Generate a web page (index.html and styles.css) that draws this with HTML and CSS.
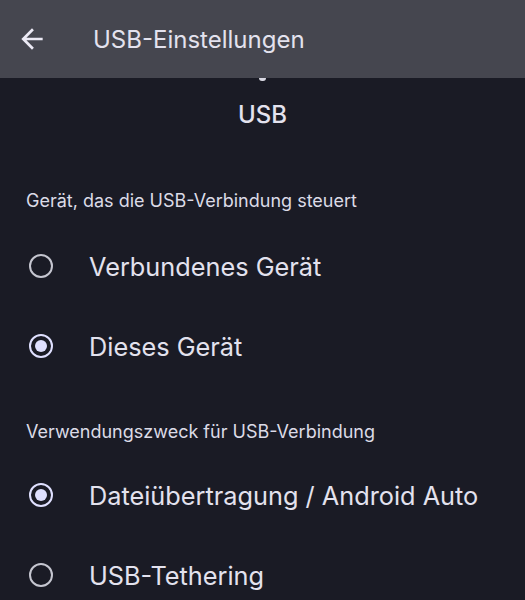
FILE: index.html
```html
<!DOCTYPE html>
<html lang="de">

<head>
    <meta charset="UTF-8">
    <meta name="viewport" content="width=device-width, initial-scale=1.0">
    <title>USB-Einstellungen</title>
    <link rel="stylesheet" href="styles.css">
</head>

<body>

    <header class="app-bar">
        <button class="back-btn" aria-label="Zurück">
            <svg viewBox="0 0 24 24" width="32" height="32">
                <path d="M20 11H7.83l5.59-5.59L12 4l-8 8 8 8 1.41-1.41L7.83 13H20v-2z" fill="currentColor"/>
            </svg>
        </button>
        <h1 class="app-title">USB-Einstellungen</h1>
    </header>

    <main class="content">
        <div class="peek"></div>
        <div class="page-title">USB</div>

        <div class="section-label first">Gerät, das die USB-Verbindung steuert</div>
        <label class="radio-row">
            <input type="radio" name="control">
            <span class="radio"></span>
            <span class="radio-text">Verbundenes Gerät</span>
        </label>
        <label class="radio-row">
            <input type="radio" name="control" checked>
            <span class="radio"></span>
            <span class="radio-text">Dieses Gerät</span>
        </label>

        <div class="section-label">Verwendungszweck für USB-Verbindung</div>
        <label class="radio-row">
            <input type="radio" name="mode" checked>
            <span class="radio"></span>
            <span class="radio-text">Dateiübertragung / Android Auto</span>
        </label>
        <label class="radio-row">
            <input type="radio" name="mode">
            <span class="radio"></span>
            <span class="radio-text">USB-Tethering</span>
        </label>
    </main>

</body>

</html>
```

FILE: styles.css
```css
body {
    font-family: Inter, Roboto, sans-serif;
    margin: 0;
    background-color: #1a1b25;
    color: #e3e2ee;
    height: 600px;
    overflow: hidden;
}

.app-bar {
    display: flex;
    align-items: center;
    height: 78px;
    background-color: #45464f;
}

.back-btn {
    display: flex;
    align-items: center;
    justify-content: center;
    width: 32px;
    height: 32px;
    margin-left: 16px;
    padding: 0;
    border: none;
    background: none;
    color: #eceaf5;
}

.app-title {
    margin: 0 0 0 45px;
    font-size: 24px;
    font-weight: 400;
    color: #e3e2ee;
}

.content {
    display: flex;
    flex-direction: column;
}

.peek {
    align-self: center;
    width: 7px;
    height: 3px;
    border-radius: 0 0 4px 4px;
    background-color: #d8d8e2;
}

.page-title {
    margin-top: 19px;
    line-height: 30px;
    text-align: center;
    font-size: 24px;
    font-weight: 500;
}

.section-label {
    padding: 36px 26px 13px;
    line-height: 20px;
    font-size: 18px;
    color: #dcdbe7;
}

.section-label.first {
    padding-top: 61px;
    padding-bottom: 15px;
}

.radio-row {
    display: flex;
    align-items: center;
    height: 80px;
    padding-left: 29px;
}

.radio-row input {
    display: none;
}

.radio {
    box-sizing: border-box;
    display: flex;
    align-items: center;
    justify-content: center;
    width: 24px;
    height: 24px;
    border: 2px solid #c5c6d0;
    border-radius: 50%;
}

.radio-row input:checked + .radio {
    border-color: #dfe0ff;
}

.radio-row input:checked + .radio::after {
    content: "";
    width: 12px;
    height: 12px;
    border-radius: 50%;
    background-color: #dfe0ff;
}

.radio-text {
    margin-left: 36px;
    font-size: 25.3px;
    color: #e3e2ee;
}
```
